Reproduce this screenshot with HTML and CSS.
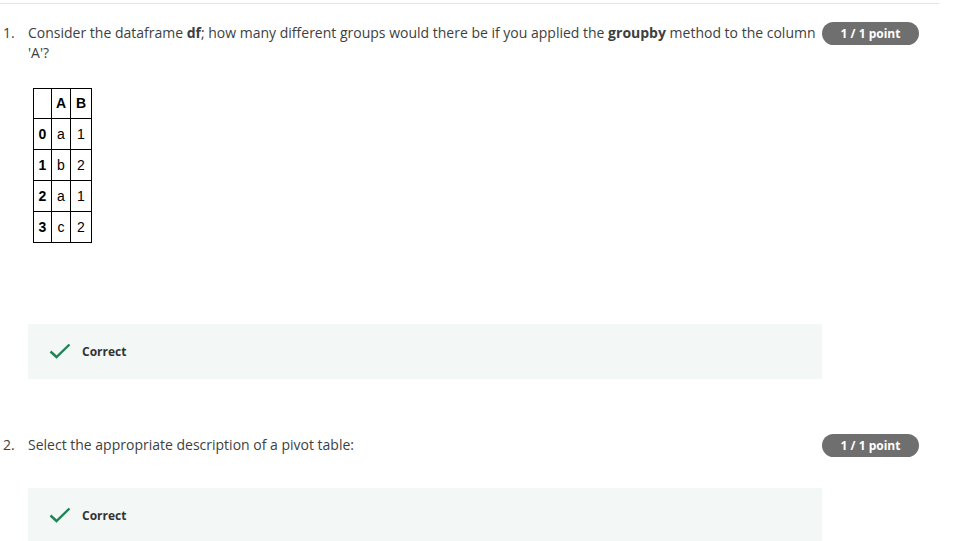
FILE: index.html
```html
<!DOCTYPE html>
<html>
<head>
<meta charset="utf-8">
<link rel="stylesheet" href="styles.css">
</head>
<body>
<div class="page">
  <div class="question q1">
    <div class="q-row">
      <div class="q-num">1.</div>
      <div class="q-body">
        <div class="q-text">Consider the dataframe <b>df</b>; how many different groups would there be if you applied the <b>groupby</b> method to the column 'A'?</div>
        <table class="df">
          <tr><th></th><th>A</th><th>B</th></tr>
          <tr><th>0</th><td>a</td><td>1</td></tr>
          <tr><th>1</th><td>b</td><td>2</td></tr>
          <tr><th>2</th><td>a</td><td>1</td></tr>
          <tr><th>3</th><td>c</td><td>2</td></tr>
        </table>
      </div>
      <div class="badge">1 / 1 point</div>
    </div>
    <div class="feedback">
      <svg class="check" width="22" height="16" viewBox="0 0 22 16"><path d="M1.5 8.5 L7.5 14 L20.5 1.5" fill="none" stroke="#1f8354" stroke-width="2.4"/></svg>
      <span>Correct</span>
    </div>
  </div>
  <div class="question q2">
    <div class="q-row">
      <div class="q-num">2.</div>
      <div class="q-body">
        <div class="q-text">Select the appropriate description of a pivot table:</div>
      </div>
      <div class="badge">1 / 1 point</div>
    </div>
    <div class="feedback">
      <svg class="check" width="22" height="16" viewBox="0 0 22 16"><path d="M1.5 8.5 L7.5 14 L20.5 1.5" fill="none" stroke="#1f8354" stroke-width="2.4"/></svg>
      <span>Correct</span>
    </div>
  </div>
</div>
</body>
</html>
```
FILE: styles.css
```css
html, body {
  margin: 0;
  padding: 0;
  background: #fff;
}
body {
  font-family: "Open Sans", sans-serif;
  font-size: 14px;
  color: #3d3f41;
  overflow: hidden;
}
.page {
  width: 939px;
  margin-top: 3px;
  border-top: 1px solid #e5e5e5;
}
.question.q1 {
  padding-top: 19px;
}
.question.q2 {
  padding-top: 56px;
}
.q-row {
  display: flex;
  align-items: flex-start;
}
.q-num {
  width: 25px;
  padding-left: 3px;
  line-height: 20px;
}
.q-body {
  flex: 1;
  padding-right: 6px;
}
.q-text {
  line-height: 20px;
}
.q-text b {
  font-weight: 700;
}
.badge {
  flex: none;
  width: 97px;
  height: 23px;
  margin-top: -1px;
  margin-right: 20px;
  border-radius: 12px;
  background: #6f6f6f;
  color: #fff;
  font-size: 12px;
  font-weight: 700;
  line-height: 23px;
  text-align: center;
}
.df {
  margin: 25px 0 0 5px;
  border-collapse: collapse;
  font-family: "Liberation Sans", Arial, sans-serif;
  font-size: 14px;
  color: #000;
}
.df th, .df td {
  border: 1px solid #000;
  padding: 7px 0;
  line-height: 16px;
  text-align: center;
}
.df th:first-child { width: 17px; }
.df td:nth-child(2), .df th:nth-child(2) { width: 18px; }
.df td:nth-child(3), .df th:nth-child(3) { width: 20px; }
.df tr:first-child th {
  padding-top: 6px;
  padding-bottom: 6px;
  line-height: 17px;
}
.df th {
  font-weight: 700;
}
.feedback {
  margin: 81px 0 0 28px;
  width: 794px;
  height: 55px;
  background: #f3f8f6;
  display: flex;
  align-items: center;
  padding-left: 21px;
  box-sizing: border-box;
  font-size: 12px;
  font-weight: 700;
  color: #333;
}
.q2 .feedback {
  margin-top: 31px;
}
.check {
  margin-right: 11px;
  margin-top: -2px;
}
```
